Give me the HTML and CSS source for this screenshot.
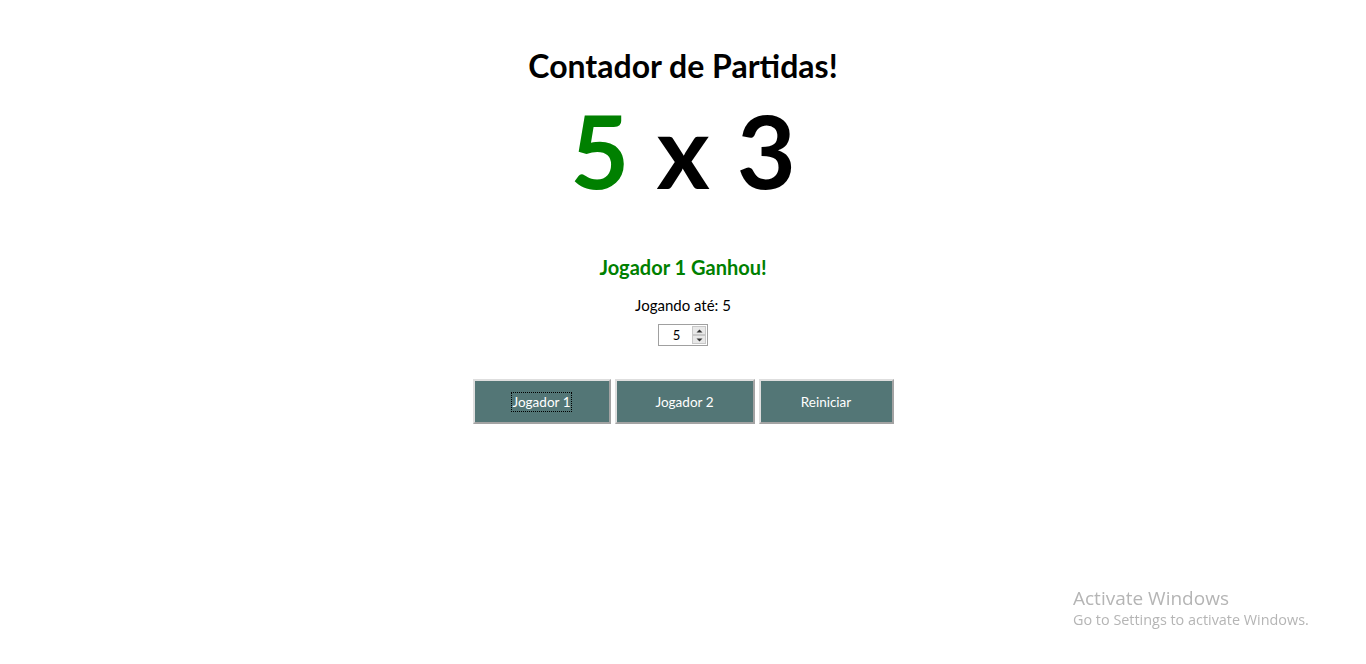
FILE: index.html
```html
<!DOCTYPE html>
<html lang="pt-BR">
<head>
<meta charset="utf-8">
<title>Contador de Partidas</title>
<link rel="stylesheet" href="styles.css">
</head>
<body>
<main class="app">
  <h1 class="title">Contador de Partidas!</h1>
  <div class="score">
    <span class="win">5</span>
    <span class="sep">x</span>
    <span>3</span>
  </div>
  <h2 class="result">Jogador 1 Ganhou!</h2>
  <p class="limit">Jogando até: 5</p>
  <div class="spin">
    <span class="spin-value">5</span>
    <span class="spin-btns">
      <span class="spin-btn"><svg width="7" height="4" viewBox="0 0 7 4"><path d="M0.5 3.5 L3.5 0.5 L6.5 3.5 Z" fill="#333"/></svg></span>
      <span class="spin-btn"><svg width="7" height="4" viewBox="0 0 7 4"><path d="M0.5 0.5 L3.5 3.5 L6.5 0.5 Z" fill="#333"/></svg></span>
    </span>
  </div>
  <div class="actions">
    <button class="btn btn-1"><span class="focus">Jogador 1</span></button>
    <button class="btn btn-2">Jogador 2</button>
    <button class="btn btn-3">Reiniciar</button>
  </div>
</main>
<div class="watermark">
  <div class="wm-title">Activate Windows</div>
  <div class="wm-sub">Go to Settings to activate Windows.</div>
</div>
</body>
</html>
```
FILE: styles.css
```css
html, body {
  margin: 0;
  padding: 0;
  background: #ffffff;
}
body {
  font-family: Lato, "Open Sans", sans-serif;
  color: #000;
  height: 664px;
  overflow: hidden;
}
.app {
  display: flex;
  flex-direction: column;
  align-items: center;
  padding-top: 46px;
}
.title {
  margin: 0;
  font-size: 32px;
  font-weight: 700;
  line-height: 40px;
}
.score {
  margin-top: 12px;
  font-size: 102px;
  font-weight: 700;
  line-height: 104px;
  display: flex;
  gap: 27px;
}
.win { color: #008000; }
.result {
  margin: 52px 0 0;
  font-size: 20px;
  font-weight: 700;
  color: #008000;
  line-height: 26px;
}
.limit {
  margin: 15px 0 0;
  font-size: 15px;
  line-height: 20px;
}
.spin {
  margin-top: 9px;
  width: 48px;
  height: 20px;
  border: 1px solid #a0a0a0;
  display: flex;
  align-items: center;
  font-size: 13px;
}
.spin-value {
  flex: 1;
  text-align: center;
  padding-left: 2px;
}
.spin-btns {
  display: flex;
  flex-direction: column;
  width: 14px;
  height: 18px;
  margin-right: 1px;
}
.spin-btn {
  flex: 1;
  display: flex;
  align-items: center;
  justify-content: center;
  background: #e8e8e8;
  border: 1px solid #c8c8c8;
}
.actions {
  margin-top: 33px;
  display: flex;
  gap: 4px;
}
.btn {
  height: 45px;
  background: #537676;
  color: #fff;
  border-style: solid;
  border-width: 2px;
  border-color: #dedede #a3a3a3 #a3a3a3 #dedede;
  font-family: Lato, "Open Sans", sans-serif;
  font-size: 13.5px;
  padding: 0;
}
.btn-1 { width: 138px; }
.btn-2 { width: 140px; }
.btn-3 { width: 135px; }
.focus {
  outline: 1px dotted #000;
  outline-offset: 1px;
}
.watermark {
  position: fixed;
  left: 1073px;
  top: 586px;
  color: #b5b5b5;
  font-family: "Open Sans", sans-serif;
}
.wm-title {
  font-size: 19px;
  line-height: 24px;
}
.wm-sub {
  font-size: 14.4px;
  line-height: 20px;
}
```
